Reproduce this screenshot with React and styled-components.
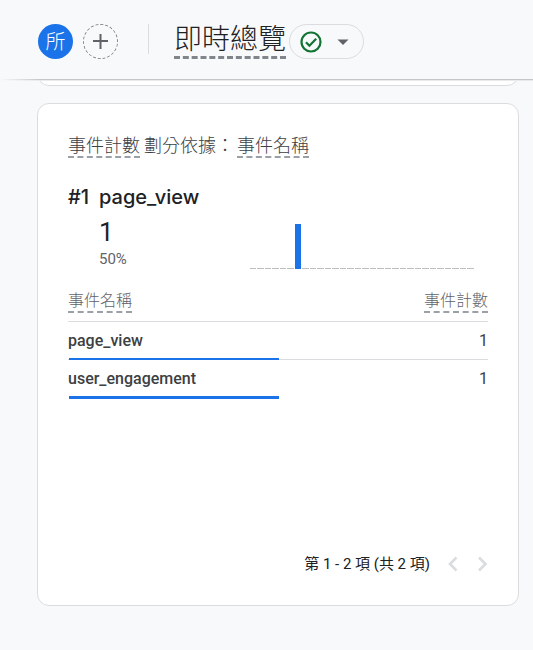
import React from "react";
import styled, { createGlobalStyle } from "styled-components";

const GlobalStyle = createGlobalStyle`
  *, *::before, *::after { box-sizing: border-box; }
  body {
    margin: 0;
    background: #f8f9fb;
    color: #202124;
    font-family: Roboto, "Noto Sans CJK TC", sans-serif;
  }
  button { font: inherit; color: inherit; padding: 0; cursor: pointer; }
`;

const Header = styled.header`
  position: sticky;
  top: 0;
  z-index: 2;
  display: flex;
  align-items: center;
  height: 79px;
  padding: 4px 38px 0;
  background: #f8f9fb;

  &::after {
    content: "";
    position: absolute;
    left: 0;
    right: 0;
    top: 100%;
    height: 2px;
    background: linear-gradient(to bottom, #c4c6c8 50%, #e9eaec 50%);
    mask-image: linear-gradient(to right, transparent, #000 40px);
  }
`;

const RoundButton = styled.button`
  display: grid;
  place-items: center;
  width: 35px;
  height: 35px;
  border-radius: 50%;
  border: ${(p) => (p.$filled ? "none" : "1px dashed #80868b")};
  background: ${(p) => (p.$filled ? "#1a73e8" : "transparent")};
  color: ${(p) => (p.$filled ? "#fff" : "#5f6368")};
  font-size: 20px;
  line-height: 24px;
  font-weight: 300;

  & + & { margin-left: 10px; }
`;

const Divider = styled.span`
  width: 1px;
  height: 30px;
  margin: 0 25px 6px 30px;
  background: #dadce0;
`;

const PageTitle = styled.h1`
  margin: 0 3px 0 0;
  border-bottom: 3px dashed #80868b;
  font-size: 28px;
  line-height: 32px;
  font-weight: 300;
  white-space: nowrap;
`;

const StatusButton = styled.button`
  display: flex;
  align-items: center;
  justify-content: space-between;
  width: 75px;
  height: 35px;
  padding: 0 14px 0 10px;
  border: 1px solid #dadce0;
  border-radius: 18px;
  background: transparent;
`;

const Main = styled.main`
  padding: 0 14px 44px 37px;
`;

const cardFrame = `
  border: 1px solid #dadce0;
  border-radius: 12px;
  background: #fff;
`;

const PreviousCard = styled.section`
  ${cardFrame}
  height: 32px;
  margin-top: -25px;
`;

const Card = styled.section`
  ${cardFrame}
  display: flex;
  flex-direction: column;
  min-height: 503px;
  margin-top: 17px;
  padding: 32px 30px 29px;
`;

const CardTitle = styled.h2`
  display: flex;
  align-items: flex-start;
  margin: 0;
  color: #3c4043;
  font-size: 18px;
  line-height: 20px;
  font-weight: 300;
`;

const Term = styled.button`
  border: 0;
  border-bottom: 2px dashed #9aa0a6;
  background: none;
  font-weight: inherit;
  line-height: inherit;
`;

const TitleText = styled.span`
  margin: 0 3px 0 4px;
`;

const Summary = styled.div`
  display: grid;
  grid-template-columns: 31px 1fr auto;
  margin-top: 23px;
`;

const TopName = styled.h3`
  margin: 0;
  grid-column: ${(p) => (p.$rank ? "1" : "2 / 4")};
  font-family: Inter, Roboto, sans-serif;
  font-size: 20px;
  line-height: 32px;
  font-weight: 500;
`;

const Figures = styled.div`
  grid-column: 2;
`;

const Count = styled.div`
  margin-top: 1px;
  font-size: 26px;
  line-height: 36px;
`;

const Share = styled.div`
  color: #5f6368;
  font-size: 15px;
  line-height: 18px;
`;

const Chart = styled.svg`
  display: block;
  margin: 11px 13px 0 0;
`;

const Table = styled.table`
  width: 100%;
  margin-top: 22px;
  border-spacing: 0;
  color: #3c4043;
  font-size: 16px;
`;

const HeadCell = styled.th`
  padding: 0 0 8px;
  border-bottom: 1px solid #dadce0;
  color: #5f6368;
  font-weight: 300;
  line-height: 20px;
  text-align: ${(p) => (p.$end ? "right" : "left")};
`;

const Row = styled.tr`
  position: relative;
  height: 38px;
  background: #fff;
`;

const Cell = styled.td`
  padding: 0;
  border-bottom: 1px solid ${(p) => (p.$last ? "transparent" : "#dadce0")};
  font-weight: ${(p) => (p.$end ? 400 : 500)};
  text-align: ${(p) => (p.$end ? "right" : "left")};
`;

const Bar = styled.span`
  position: absolute;
  left: 1px;
  bottom: -1px;
  height: 3px;
  background: #1a73e8;
`;

const Pager = styled.nav`
  display: flex;
  align-items: center;
  justify-content: flex-end;
  margin-top: auto;
  font-size: 15px;
  line-height: 24px;
`;

const PagerText = styled.span`
  margin-right: 8px;
`;

const PagerButton = styled.button`
  display: grid;
  place-items: center;
  width: 30px;
  height: 24px;
  border: 0;
  background: none;
  color: #dadce0;

  &:last-child { margin-right: -10px; }
`;

const rows = [
  { name: "page_view", count: 1, share: 50 },
  { name: "user_engagement", count: 1, share: 50 },
];

const minutes = Array.from({ length: 30 }, (_, i) => (i === 6 ? 1 : 0));

function MinuteChart() {
  return (
    <Chart width="225" height="45" viewBox="0 0 225 45" role="img" aria-label="page_view">
      {minutes.map((value, i) => (
        <rect
          key={i}
          x={Math.floor(i * 7.5)}
          y={value ? 0 : 44}
          width={i % 2 && !value ? 7 : 6}
          height={value ? 45 : 1}
          fill={value ? "#1a73e8" : "#bdbdbd"}
        />
      ))}
    </Chart>
  );
}

function Chevron({ d }) {
  return (
    <svg width="24" height="24" viewBox="0 0 24 24" fill="none" stroke="currentColor" strokeWidth="2.6" aria-hidden="true">
      <path d={d} />
    </svg>
  );
}

export default function App() {
  return (
    <>
      <GlobalStyle />
      <Header>
        <RoundButton $filled>所</RoundButton>
        <RoundButton aria-label="+">
          <svg width="15" height="15" viewBox="0 0 15 15" stroke="currentColor" strokeWidth="2" aria-hidden="true">
            <path d="M7.5 0v15M0 7h15" />
          </svg>
        </RoundButton>
        <Divider />
        <PageTitle>即時總覽</PageTitle>
        <StatusButton aria-haspopup="menu" aria-label="即時總覽">
          <svg width="22" height="22" viewBox="0 0 22 22" fill="none" stroke="#137333" strokeWidth="2.2" aria-hidden="true">
            <circle cx="11" cy="11" r="9.5" />
            <path d="M6 11.300l3.400 3.400 6.800-7" />
          </svg>
          <svg width="12" height="6" viewBox="0 0 12 6" fill="#5f6368" aria-hidden="true">
            <path d="M0.5 0.5h11L6 6z" />
          </svg>
        </StatusButton>
      </Header>
      <Main>
        <PreviousCard />
        <Card>
          <CardTitle>
            <Term>事件計數</Term>
            <TitleText>劃分依據：</TitleText>
            <Term>事件名稱</Term>
          </CardTitle>
          <Summary>
            <TopName $rank>#1</TopName>
            <TopName>page_view</TopName>
            <Figures>
              <Count>1</Count>
              <Share>50%</Share>
            </Figures>
            <MinuteChart />
          </Summary>
          <Table>
            <thead>
              <tr>
                <HeadCell scope="col"><Term>事件名稱</Term></HeadCell>
                <HeadCell scope="col" $end><Term>事件計數</Term></HeadCell>
              </tr>
            </thead>
            <tbody>
              {rows.map((row, i) => (
                <Row key={row.name}>
                  <Cell $last={i === rows.length - 1}>
                    {row.name}
                    <Bar style={{ width: `${row.share}%` }} />
                  </Cell>
                  <Cell $end $last={i === rows.length - 1}>{row.count}</Cell>
                </Row>
              ))}
            </tbody>
          </Table>
          <Pager>
            <PagerText>第 1 - 2 項 (共 2 項)</PagerText>
            <PagerButton disabled aria-label="‹">
              <Chevron d="M15.500 5.500L9 12l6.500 6.500" />
            </PagerButton>
            <PagerButton disabled aria-label="›">
              <Chevron d="M8 5.500l6.500 6.500L8 18.500" />
            </PagerButton>
          </Pager>
        </Card>
      </Main>
    </>
  );
}
